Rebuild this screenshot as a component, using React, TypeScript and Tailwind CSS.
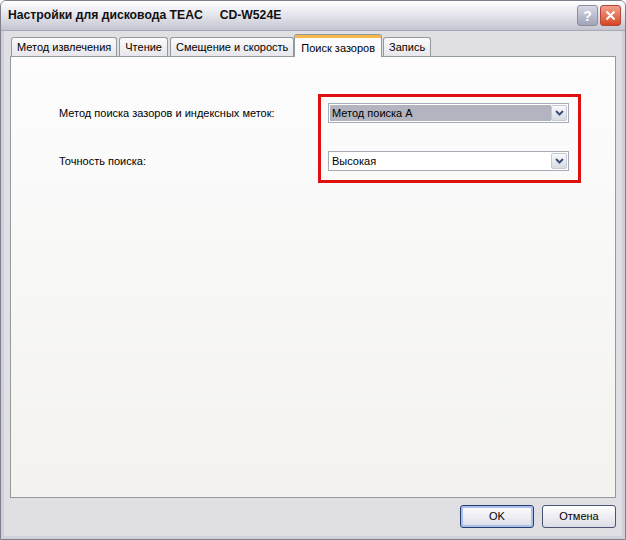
import { useState } from 'react';

const tabs = ['Метод извлечения', 'Чтение', 'Смещение и скорость', 'Поиск зазоров', 'Запись'];

function Chevron() {
  return (
    <svg width="9" height="6" viewBox="0 0 9 6" className="text-[#3d4f78]">
      <path d="M1 1 L4.5 4.5 L8 1" fill="none" stroke="currentColor" strokeWidth={2} />
    </svg>
  );
}

function Combo({ value, selected }: { value: string; selected?: boolean }) {
  return (
    <div className="flex h-[20px] items-stretch border border-[#a5acb5] bg-white p-px">
      <div className={`flex flex-1 items-center px-[2px] ${selected ? 'bg-[#b2b4bf]' : ''}`}>{value}</div>
      {/* Dropdown arrow button */}
      <div className="flex w-[16px] items-center justify-center rounded-[2px] border border-[#c5c9d6] bg-gradient-to-b from-[#f8f9fb] to-[#d8dbe4]">
        <Chevron />
      </div>
    </div>
  );
}

export default function App() {
  const [active, setActive] = useState(3);

  return (
    <div
      className="flex h-[540px] w-[626px] flex-col overflow-hidden rounded-t-[6px] border border-[#7e7e8c] bg-[#e0dfe3] text-[11px] text-black"
      style={{ fontFamily: '"Liberation Sans", Arial, sans-serif' }}
    >
      {/* Title bar */}
      <header className="flex h-[30px] shrink-0 items-center justify-between border-b border-[#a8a8b4] bg-gradient-to-b from-[#ffffff] via-[#e4e4ec] to-[#c4c4d0] pl-[7px] pr-[4px]">
        <h1 className="whitespace-pre text-[12.2px] font-bold text-[#111]">
          Настройки для дисковода TEAC     CD-W524E
        </h1>
        <div className="flex gap-[2px]">
          <button className="flex h-[21px] w-[21px] items-center justify-center rounded-[3px] border border-[#8d8da0] bg-gradient-to-b from-[#d8dae6] to-[#a0a4b8] text-[14px] font-bold leading-none text-white">
            ?
          </button>
          <button className="flex h-[21px] w-[21px] items-center justify-center rounded-[3px] border border-[#b0473b] bg-gradient-to-b from-[#f0a08a] to-[#d8431e]">
            <svg width="11" height="11" viewBox="0 0 11 11">
              <path d="M1.5 1.5 L9.5 9.5 M9.5 1.5 L1.5 9.5" stroke="white" strokeWidth={2} />
            </svg>
          </button>
        </div>
      </header>

      <div className="flex flex-1 flex-col border-x-[3px] border-b-[3px] border-[#d0d0da] px-[6px] pt-[2px]">
        {/* Tabs */}
        <nav className="flex h-[23px] items-end pl-[1px]">
          {tabs.map((t, i) =>
            i === active ? (
              <button
                key={t}
                onClick={() => setActive(i)}
                className="relative z-10 -mb-px -ml-[2px] mr-[1px] flex h-[23px] flex-col rounded-t-[3px] border border-b-0 border-[#919b9c] bg-[#fcfcfe] px-[6px]"
              >
                <span className="-mx-[6px] h-[3px] self-stretch rounded-t-[2px] bg-[#f5b64c]" />
                <span className="pt-[2px]">{t}</span>
              </button>
            ) : (
              <button
                key={t}
                onClick={() => setActive(i)}
                className="mr-[2px] h-[19px] rounded-t-[3px] border border-b-0 border-[#919b9c] bg-gradient-to-b from-[#fbfbfc] to-[#e6e6ec] px-[5px] pt-[1px]"
              >
                {t}
              </button>
            )
          )}
        </nav>

        {/* Tab panel */}
        <section className="flex h-[442px] shrink-0 border border-[#919b9c] bg-gradient-to-b from-[#fdfdfe] to-[#f3f2ee] pl-[48px] pt-[37px]">
          <div className="flex w-[259px] flex-col gap-[28px] pt-[9px]">
            <label className="flex h-[20px] items-center">Метод поиска зазоров и индексных меток:</label>
            <label className="flex h-[20px] items-center">Точность поиска:</label>
          </div>
          {/* Highlighted area */}
          <div className="flex h-[89px] w-[263px] flex-col gap-[28px] border-[3px] border-[#e01010] pb-[8px] pl-[7px] pr-[9px] pt-[6px]">
            <Combo value="Метод поиска А" selected />
            <Combo value="Высокая" />
          </div>
        </section>

        {/* Footer buttons */}
        <footer className="flex flex-1 items-center justify-end gap-[8px] pb-[1px]">
          <button className="h-[23px] w-[74px] rounded-[3px] border border-[#2a3a6a] bg-gradient-to-b from-[#ffffff] to-[#dcdce6] shadow-[inset_0_0_0_2px_#a8c0ec]">
            OK
          </button>
          <button className="h-[23px] w-[74px] rounded-[3px] border border-[#4a5272] bg-gradient-to-b from-[#ffffff] to-[#dcdce6]">
            Отмена
          </button>
        </footer>
      </div>
    </div>
  );
}
